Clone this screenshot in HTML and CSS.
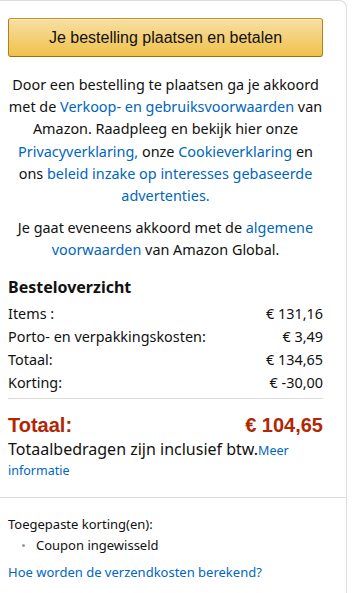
FILE: index.html
```html
<!DOCTYPE html>
<html lang="nl">
<head>
<meta charset="utf-8">
<link rel="stylesheet" href="styles.css">
</head>
<body>
<div class="box">
  <div class="inner">
    <button class="place-btn">Je bestelling plaatsen en betalen</button>
    <p class="legal">Door een bestelling te plaatsen ga je akkoord met de <a href="#">Verkoop- en gebruiksvoorwaarden</a> van Amazon. Raadpleeg en bekijk hier onze <a href="#">Privacyverklaring,</a> onze <a href="#">Cookieverklaring</a> en ons <a href="#">beleid inzake op interesses gebaseerde advertenties.</a></p>
    <p class="legal">Je gaat eveneens akkoord met de <a href="#">algemene voorwaarden</a> van Amazon Global.</p>
    <h3 class="summary-title">Besteloverzicht</h3>
    <div class="rows">
      <div class="row"><span>Items :</span><span>€ 131,16</span></div>
      <div class="row"><span>Porto- en verpakkingskosten:</span><span>€ 3,49</span></div>
      <div class="row"><span>Totaal:</span><span>€ 134,65</span></div>
      <div class="row"><span>Korting:</span><span>€ -30,00</span></div>
    </div>
    <div class="grand">
      <span>Totaal:</span><span>€ 104,65</span>
    </div>
    <p class="vat">Totaalbedragen zijn inclusief btw.<a href="#">Meer informatie</a></p>
  </div>
  <div class="lower">
    <div class="applied">Toegepaste korting(en):</div>
    <ul class="coupons"><li>Coupon ingewisseld</li></ul>
    <a class="ship-link" href="#">Hoe worden de verzendkosten berekend?</a>
  </div>
</div>
</body>
</html>
```
FILE: styles.css
```css
html, body {
  margin: 0;
  padding: 0;
  background: #fff;
}
body {
  font-family: "Noto Sans", "Liberation Sans", sans-serif;
  color: #111;
  overflow: hidden;
}
a {
  color: #0066c0;
  text-decoration: none;
}
.box {
  width: 346px;
  border-top: 1px solid #ddd;
  border-right: 1px solid #ddd;
  border-top-right-radius: 8px;
  min-height: 600px;
}
.inner {
  padding: 17px 23px 18px 8px;
  border-bottom: 1px solid #ddd;
}
.place-btn {
  display: block;
  width: 315px;
  height: 39px;
  margin: 0;
  padding: 0;
  border: 1px solid;
  border-color: #c89411 #b0820f #99710d;
  border-radius: 3px;
  background: linear-gradient(to bottom, #f7dfa5, #f0c14b);
  box-shadow: inset 0 1px 0 rgba(255,255,255,.4);
  font-family: "Liberation Sans", Arial, sans-serif;
  font-size: 16px;
  color: #111;
  text-align: center;
}
.legal {
  margin: 17px -4px 0 -4px;
  text-align: center;
  font-size: 14.4px;
  line-height: 22.2px;
  color: #111;
}
.legal + .legal {
  margin-top: 10px;
}
.summary-title {
  margin: 14px 0 0 0;
  font-size: 16px;
  line-height: 22px;
  font-weight: bold;
}
.rows {
  margin-top: 4px;
  padding-bottom: 4px;
  border-bottom: 1px solid #ddd;
}
.row {
  display: flex;
  justify-content: space-between;
  font-size: 14.4px;
  line-height: 23px;
  color: #111;
}
.grand {
  display: flex;
  justify-content: space-between;
  margin-top: 12px;
  font-family: "Liberation Sans", Arial, sans-serif;
  font-weight: bold;
  font-size: 20px;
  line-height: 28px;
  color: #b12704;
}
.vat {
  margin: 0;
  font-size: 16px;
  line-height: 20px;
}
.vat a {
  font-size: 12.5px;
  line-height: 14px;
}
.lower {
  padding: 17px 8px;
  font-size: 13px;
  line-height: 19px;
}
.coupons {
  margin: 1px 0 7px 0;
  padding-left: 28px;
  list-style: none;
}
.coupons li {
  position: relative;
  font-size: 13px;
  line-height: 20px;
}
.coupons li::before {
  content: "";
  position: absolute;
  left: -14px;
  top: 9px;
  width: 3px;
  height: 3px;
  border-radius: 50%;
  background: #999;
}
.ship-link {
  display: block;
  font-size: 13px;
  line-height: 20px;
}
```
